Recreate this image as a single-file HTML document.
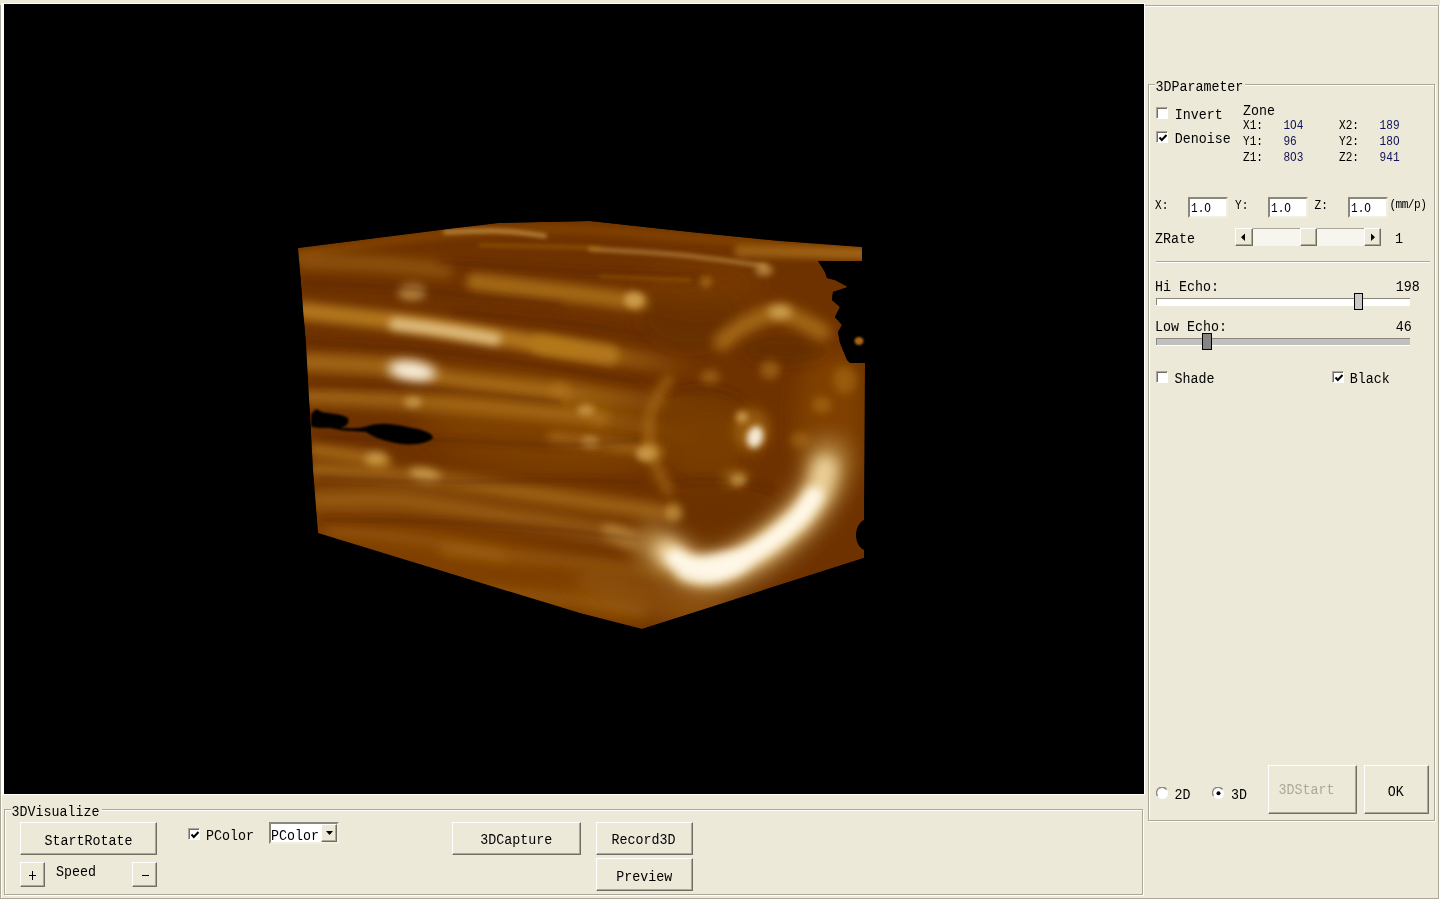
<!DOCTYPE html>
<html><head><meta charset='utf-8'><style>
*{margin:0;padding:0}
html,body{width:1440px;height:900px;overflow:hidden;background:#ECE9D8;position:relative}
.abs{position:absolute}
.t{position:absolute;font-family:'Liberation Mono',monospace;line-height:13px;white-space:pre;color:#000;transform-origin:0 0}
.btn{position:absolute;box-sizing:border-box;background:#ECE9D8;border-top:1px solid #fff;border-left:1px solid #fff;border-right:1px solid #716F64;border-bottom:1px solid #716F64;box-shadow:inset -1px -1px #ACA899}
.grp{position:absolute;border:1px solid #ACA899;box-shadow:inset 1px 1px #fff,1px 1px #fff}
.chk{position:absolute;width:12px;height:12px;box-sizing:border-box;background:#fff;border-top:1px solid #ACA899;border-left:1px solid #ACA899;border-right:1px solid #fff;border-bottom:1px solid #fff;box-shadow:inset 1px 1px #716F64}
.sunk{box-sizing:content-box;border-top:2px solid #8a887c;border-left:2px solid #8a887c;border-right:2px solid #F1EFE2;border-bottom:2px solid #F1EFE2}
.track{background:#F6F5EE;box-sizing:border-box;border-top:1px solid #ACA899;border-left:1px solid #ACA899}
</style></head><body>
<div class="abs" style="left:0;top:5px;width:1438px;height:893px;border-left:1px solid #ACA899;border-top:1px solid #ACA899;box-shadow:inset 1px 1px #fff"></div>
<div class="abs" style="left:1438px;top:5px;width:1px;height:894px;background:#ACA899"></div>
<div class="abs" style="left:0px;top:898px;width:1439px;height:1px;background:#ACA899"></div>
<div class="abs" style="left:1439px;top:5px;width:1px;height:895px;background:#fff"></div>
<div class="abs" style="left:0px;top:899px;width:1440px;height:1px;background:#fff"></div>
<div class="abs" style="left:1px;top:3px;width:1144px;height:792px;background:#fff"></div>
<div class="abs" style="left:4px;top:4px;width:1140px;height:790px;background:#000;overflow:hidden"><svg width="1140" height="790" viewBox="4 4 1140 790" style="position:absolute;left:0;top:0">
<defs>
<linearGradient id="gL" gradientUnits="userSpaceOnUse" x1="560" y1="0" x2="700" y2="0"><stop offset="0" stop-color="#b4781a"/><stop offset="1" stop-color="#b4781a" stop-opacity="0"/></linearGradient><clipPath id="cp"><polygon points="298,248 448,229 498,223 590,221 690,232 780,241 862,247 862,261 818,261 825,272 827,278 835,280 848,287 833,292 832,300 840,307 835,317 842,325 838,332 840,343 847,360 850,363 865,363 864,558 642,629 580,613 318,533 313,470 306,345"/></clipPath>
<filter id="b1" filterUnits="userSpaceOnUse" x="200" y="150" width="800" height="600"><feGaussianBlur stdDeviation="1"/></filter><filter id="b2" filterUnits="userSpaceOnUse" x="200" y="150" width="800" height="600"><feGaussianBlur stdDeviation="2"/></filter><filter id="b3" filterUnits="userSpaceOnUse" x="200" y="150" width="800" height="600"><feGaussianBlur stdDeviation="3"/></filter><filter id="b4" filterUnits="userSpaceOnUse" x="200" y="150" width="800" height="600"><feGaussianBlur stdDeviation="4"/></filter><filter id="b5" filterUnits="userSpaceOnUse" x="200" y="150" width="800" height="600"><feGaussianBlur stdDeviation="5"/></filter><filter id="b6" filterUnits="userSpaceOnUse" x="200" y="150" width="800" height="600"><feGaussianBlur stdDeviation="6"/></filter><filter id="b7" filterUnits="userSpaceOnUse" x="200" y="150" width="800" height="600"><feGaussianBlur stdDeviation="7"/></filter><filter id="b8" filterUnits="userSpaceOnUse" x="200" y="150" width="800" height="600"><feGaussianBlur stdDeviation="8"/></filter><filter id="b9" filterUnits="userSpaceOnUse" x="200" y="150" width="800" height="600"><feGaussianBlur stdDeviation="9"/></filter><filter id="b10" filterUnits="userSpaceOnUse" x="200" y="150" width="800" height="600"><feGaussianBlur stdDeviation="10"/></filter><filter id="b12" filterUnits="userSpaceOnUse" x="200" y="150" width="800" height="600"><feGaussianBlur stdDeviation="12"/></filter><filter id="b14" filterUnits="userSpaceOnUse" x="200" y="150" width="800" height="600"><feGaussianBlur stdDeviation="14"/></filter><filter id="b16" filterUnits="userSpaceOnUse" x="200" y="150" width="800" height="600"><feGaussianBlur stdDeviation="16"/></filter><filter id="b20" filterUnits="userSpaceOnUse" x="200" y="150" width="800" height="600"><feGaussianBlur stdDeviation="20"/></filter>
</defs>
<g clip-path="url(#cp)">
<polygon points="298,248 448,229 498,223 590,221 690,232 780,241 862,247 862,261 818,261 825,272 827,278 835,280 848,287 833,292 832,300 840,307 835,317 842,325 838,332 840,343 847,360 850,363 865,363 864,558 642,629 580,613 318,533 313,470 306,345" fill="#6e3200"/>
<ellipse cx="470" cy="575" rx="175" ry="48" fill="#8a4a04" fill-opacity="0.6" transform="rotate(16 470 575)" filter="url(#b14)"/>
<ellipse cx="690" cy="315" rx="50" ry="35" fill="#582800" fill-opacity="0.35" transform="rotate(0 690 315)" filter="url(#b10)"/>
<ellipse cx="540" cy="425" rx="120" ry="50" fill="#8a4a04" fill-opacity="0.55" transform="rotate(8 540 425)" filter="url(#b16)"/>
<ellipse cx="830" cy="420" rx="35" ry="75" fill="#8a4a04" fill-opacity="0.6" transform="rotate(0 830 420)" filter="url(#b10)"/>
<ellipse cx="700" cy="285" rx="60" ry="25" fill="#8a4a04" fill-opacity="0.3" transform="rotate(0 700 285)" filter="url(#b10)"/>
<path d="M300,254 C324.2,250.7 400.3,238.2 445,234 C489.7,229.8 527.2,228.3 568,229 C608.8,229.7 641.0,234.2 690,238 C739.0,241.8 833.3,249.7 862,252" stroke="#8a4a04" stroke-width="10" stroke-opacity="0.6" fill="none" stroke-linecap="round" filter="url(#b3)"/>
<path d="M445,232 C454.2,231.8 483.3,230.3 500,231 C516.7,231.7 537.5,235.2 545,236" stroke="#d8ac5c" stroke-width="4" stroke-opacity="0.7" fill="none" stroke-linecap="round" filter="url(#b2)"/>
<path d="M590,249 C605.0,250.0 650.8,252.2 680,255 C709.2,257.8 750.8,264.2 765,266" stroke="#d8ac5c" stroke-width="4" stroke-opacity="0.55" fill="none" stroke-linecap="round" filter="url(#b2)"/>
<ellipse cx="764" cy="270" rx="9" ry="6" fill="#d8ac5c" fill-opacity="0.6" transform="rotate(0 764 270)" filter="url(#b3)"/>
<path d="M740,251 C760.3,251.5 841.7,253.5 862,254" stroke="#b4781a" stroke-width="12" stroke-opacity="0.6" fill="none" stroke-linecap="round" filter="url(#b3)"/>
<path d="M600,276 C615.0,276.7 675.0,279.3 690,280" stroke="#b4781a" stroke-width="3" stroke-opacity="0.5" fill="none" stroke-linecap="round" filter="url(#b2)"/>
<path d="M480,245 C500.0,245.5 580.0,247.5 600,248" stroke="#b4781a" stroke-width="3" stroke-opacity="0.5" fill="none" stroke-linecap="round" filter="url(#b2)"/>
<path d="M303,261 C315.8,261.5 356.3,262.5 380,264 C403.7,265.5 434.2,269.0 445,270" stroke="#b4781a" stroke-width="16" stroke-opacity="0.45" fill="none" stroke-linecap="round" filter="url(#b6)"/>
<path d="M475,282 C489.2,283.7 532.5,288.7 560,292 C587.5,295.3 626.7,300.3 640,302" stroke="#b4781a" stroke-width="18" stroke-opacity="0.75" fill="none" stroke-linecap="round" filter="url(#b5)"/>
<ellipse cx="634" cy="300" rx="10" ry="8" fill="#d8ac5c" fill-opacity="0.75" transform="rotate(0 634 300)" filter="url(#b3)"/>
<ellipse cx="412" cy="292" rx="14" ry="8" fill="#d8ac5c" fill-opacity="0.7" transform="rotate(0 412 292)" filter="url(#b4)"/>
<path d="M303,311 C319.2,312.8 374.7,318.8 400,322 C425.3,325.2 431.7,326.3 455,330 C478.3,333.7 514.2,339.8 540,344 C565.8,348.2 598.3,353.2 610,355" stroke="#b4781a" stroke-width="18" stroke-opacity="0.95" fill="none" stroke-linecap="round" filter="url(#b5)"/>
<path d="M540,344 C556.7,346.7 613.3,356.0 640,360 C666.7,364.0 690.0,366.7 700,368" stroke="url(#gL)" stroke-width="18" stroke-opacity="0.9" fill="none" stroke-linecap="round" filter="url(#b5)"/>
<path d="M395,324 C402.5,325.0 423.3,327.5 440,330 C456.7,332.5 485.8,337.5 495,339" stroke="#ecd098" stroke-width="12" stroke-opacity="0.8" fill="none" stroke-linecap="round" filter="url(#b4)"/>
<path d="M305,362 C320.8,363.0 375.0,365.0 400,368 C425.0,371.0 428.3,376.0 455,380 C481.7,384.0 542.5,390.0 560,392" stroke="#b4781a" stroke-width="18" stroke-opacity="0.75" fill="none" stroke-linecap="round" filter="url(#b6)"/>
<path d="M560,392 C575.0,393.7 626.7,399.8 650,402 C673.3,404.2 691.7,404.5 700,405" stroke="url(#gL)" stroke-width="18" stroke-opacity="0.7" fill="none" stroke-linecap="round" filter="url(#b6)"/>
<ellipse cx="412" cy="371" rx="24" ry="10" fill="#fff8e8" fill-opacity="0.95" transform="rotate(8 412 371)" filter="url(#b6)"/>
<path d="M305,396 C324.2,397.0 384.2,399.7 420,402 C455.8,404.3 490.0,407.3 520,410 C550.0,412.7 586.7,416.7 600,418" stroke="#b4781a" stroke-width="16" stroke-opacity="0.7" fill="none" stroke-linecap="round" filter="url(#b6)"/>
<path d="M600,418 C610.0,419.7 645.0,425.2 660,428 C675.0,430.8 685.0,433.8 690,435" stroke="url(#gL)" stroke-width="16" stroke-opacity="0.6" fill="none" stroke-linecap="round" filter="url(#b6)"/>
<ellipse cx="413" cy="402" rx="9" ry="6" fill="#d8ac5c" fill-opacity="0.6" transform="rotate(0 413 402)" filter="url(#b3)"/>
<ellipse cx="586" cy="410" rx="9" ry="6" fill="#d8ac5c" fill-opacity="0.6" transform="rotate(0 586 410)" filter="url(#b3)"/>
<path d="M315,450 C320.8,450.8 338.3,453.0 350,455 C361.7,457.0 379.2,460.8 385,462" stroke="#b4781a" stroke-width="14" stroke-opacity="0.7" fill="none" stroke-linecap="round" filter="url(#b5)"/>
<ellipse cx="376" cy="459" rx="11" ry="7" fill="#d8ac5c" fill-opacity="0.75" transform="rotate(0 376 459)" filter="url(#b4)"/>
<path d="M315,470 C330.3,471.2 385.2,475.2 407,477 C428.8,478.8 421.7,477.7 446,481 C470.3,484.3 517.3,491.8 553,497 C588.7,502.2 642.2,509.5 660,512" stroke="#b4781a" stroke-width="16" stroke-opacity="0.7" fill="none" stroke-linecap="round" filter="url(#b6)"/>
<ellipse cx="425" cy="475" rx="16" ry="7" fill="#d8ac5c" fill-opacity="0.75" transform="rotate(10 425 475)" filter="url(#b4)"/>
<path d="M553,438 C560.8,438.8 582.2,440.7 600,443 C617.8,445.3 650.0,450.5 660,452" stroke="#b4781a" stroke-width="12" stroke-opacity="0.6" fill="none" stroke-linecap="round" filter="url(#b5)"/>
<ellipse cx="590" cy="442" rx="9" ry="6" fill="#d8ac5c" fill-opacity="0.6" transform="rotate(0 590 442)" filter="url(#b3)"/>
<ellipse cx="645" cy="454" rx="9" ry="7" fill="#d8ac5c" fill-opacity="0.6" transform="rotate(0 645 454)" filter="url(#b3)"/>
<path d="M315,500 C329.2,500.0 369.2,497.5 400,500 C430.8,502.5 468.3,510.0 500,515 C531.7,520.0 565.0,525.0 590,530 C615.0,535.0 640.0,542.5 650,545" stroke="#b4781a" stroke-width="18" stroke-opacity="0.6" fill="none" stroke-linecap="round" filter="url(#b7)"/>
<ellipse cx="620" cy="535" rx="20" ry="8" fill="#d8ac5c" fill-opacity="0.55" transform="rotate(20 620 535)" filter="url(#b5)"/>
<path d="M446,550 C465.0,551.7 524.3,556.3 560,560 C595.7,563.7 643.3,570.0 660,572" stroke="#b4781a" stroke-width="14" stroke-opacity="0.35" fill="none" stroke-linecap="round" filter="url(#b6)"/>
<path d="M330,530 C345.0,531.7 391.7,535.8 420,540 C448.3,544.2 486.7,552.5 500,555" stroke="#b4781a" stroke-width="12" stroke-opacity="0.3" fill="none" stroke-linecap="round" filter="url(#b6)"/>
<path d="M480,592 C495.0,593.3 543.3,596.7 570,600 C596.7,603.3 628.3,610.0 640,612" stroke="#b4781a" stroke-width="12" stroke-opacity="0.35" fill="none" stroke-linecap="round" filter="url(#b6)"/>
<path d="M303,283 C319.2,283.8 372.2,285.8 400,288 C427.8,290.2 443.3,293.2 470,296 C496.7,298.8 545.0,303.5 560,305" stroke="#582800" stroke-width="6" stroke-opacity="0.45" fill="none" stroke-linecap="round" filter="url(#b3)"/>
<path d="M303,342 C322.5,343.3 387.2,347.0 420,350 C452.8,353.0 463.3,354.7 500,360 C536.7,365.3 616.7,378.3 640,382" stroke="#582800" stroke-width="6" stroke-opacity="0.45" fill="none" stroke-linecap="round" filter="url(#b3)"/>
<path d="M305,385 C324.2,385.5 377.5,385.2 420,388 C462.5,390.8 536.7,399.7 560,402" stroke="#582800" stroke-width="6" stroke-opacity="0.45" fill="none" stroke-linecap="round" filter="url(#b3)"/>
<path d="M320,438 C340.0,438.3 400.0,438.8 440,440 C480.0,441.2 526.7,445.0 560,445 C593.3,445.0 626.7,440.8 640,440" stroke="#582800" stroke-width="6" stroke-opacity="0.45" fill="none" stroke-linecap="round" filter="url(#b3)"/>
<path d="M320,478 C340.0,478.7 400.0,481.7 440,482 C480.0,482.3 526.7,480.0 560,480 C593.3,480.0 626.7,481.7 640,482" stroke="#582800" stroke-width="6" stroke-opacity="0.45" fill="none" stroke-linecap="round" filter="url(#b3)"/>
<path d="M325,520 C344.2,520.3 400.8,520.3 440,522 C479.2,523.7 526.7,527.0 560,530 C593.3,533.0 626.7,538.3 640,540" stroke="#582800" stroke-width="6" stroke-opacity="0.45" fill="none" stroke-linecap="round" filter="url(#b3)"/>
<path d="M440,262 C460.0,263.3 516.7,267.7 560,270 C603.3,272.3 676.7,275.0 700,276" stroke="#582800" stroke-width="6" stroke-opacity="0.45" fill="none" stroke-linecap="round" filter="url(#b3)"/>
<path d="M455,312 C472.5,313.7 527.5,318.2 560,322 C592.5,325.8 635.0,332.8 650,335" stroke="#582800" stroke-width="6" stroke-opacity="0.45" fill="none" stroke-linecap="round" filter="url(#b3)"/>
<ellipse cx="785" cy="350" rx="45" ry="14" fill="#582800" fill-opacity="0.4" transform="rotate(0 785 350)" filter="url(#b7)"/>
<path d="M722,342 C725.8,339.2 735.3,329.8 745,325 C754.7,320.2 767.2,311.8 780,313 C792.8,314.2 815.0,328.8 822,332" stroke="#b4781a" stroke-width="18" stroke-opacity="0.75" fill="none" stroke-linecap="round" filter="url(#b6)"/>
<ellipse cx="780" cy="312" rx="12" ry="7" fill="#d8ac5c" fill-opacity="0.8" transform="rotate(0 780 312)" filter="url(#b4)"/>
<ellipse cx="706" cy="282" rx="6" ry="6" fill="#b4781a" fill-opacity="0.6" transform="rotate(0 706 282)" filter="url(#b3)"/>
<ellipse cx="710" cy="377" rx="10" ry="7" fill="#b4781a" fill-opacity="0.6" transform="rotate(0 710 377)" filter="url(#b4)"/>
<ellipse cx="770" cy="370" rx="10" ry="9" fill="#b4781a" fill-opacity="0.6" transform="rotate(0 770 370)" filter="url(#b4)"/>
<path d="M662,400 C668.3,398.7 687.3,391.7 700,392 C712.7,392.3 731.0,394.0 738,402 C745.0,410.0 743.0,428.0 742,440 C741.0,452.0 740.7,468.0 732,474 C723.3,480.0 701.7,478.7 690,476 C678.3,473.3 666.7,461.0 662,458 Z" fill="#582800" fill-opacity="0.12" filter="url(#b9)"/>
<path d="M664,492 C673.3,491.0 702.7,485.3 720,486 C737.3,486.7 757.7,491.2 768,496 C778.3,500.8 783.7,508.5 782,515 C780.3,521.5 771.7,529.8 758,535 C744.3,540.2 715.2,546.8 700,546 C684.8,545.2 672.5,532.7 667,530 Z" fill="#582800" fill-opacity="0.12" filter="url(#b9)"/>
<ellipse cx="705" cy="440" rx="45" ry="40" fill="#8a4a04" fill-opacity="0.45" transform="rotate(0 705 440)" filter="url(#b12)"/>
<ellipse cx="735" cy="478" rx="15" ry="9" fill="#b4781a" fill-opacity="0.5" transform="rotate(0 735 478)" filter="url(#b5)"/>
<ellipse cx="673" cy="512" rx="8" ry="10" fill="#b4781a" fill-opacity="0.5" transform="rotate(0 673 512)" filter="url(#b4)"/>
<path d="M668,482 C676.7,481.5 703.0,478.0 720,479 C737.0,480.0 761.7,486.5 770,488" stroke="#502400" stroke-width="5" stroke-opacity="0.4" fill="none" stroke-linecap="round" filter="url(#b3)"/>
<path d="M668,393 C673.3,392.2 688.3,387.5 700,388 C711.7,388.5 731.7,394.7 738,396" stroke="#502400" stroke-width="5" stroke-opacity="0.35" fill="none" stroke-linecap="round" filter="url(#b3)"/>
<path d="M668,380 C665.0,385.8 652.7,402.5 650,415 C647.3,427.5 649.0,442.5 652,455 C655.0,467.5 665.3,484.2 668,490" stroke="#b4781a" stroke-width="12" stroke-opacity="0.5" fill="none" stroke-linecap="round" filter="url(#b5)"/>
<ellipse cx="649" cy="453" rx="9" ry="8" fill="#d8ac5c" fill-opacity="0.55" transform="rotate(0 649 453)" filter="url(#b4)"/>
<ellipse cx="673" cy="513" rx="9" ry="8" fill="#d8ac5c" fill-opacity="0.55" transform="rotate(0 673 513)" filter="url(#b4)"/>
<ellipse cx="752" cy="430" rx="18" ry="22" fill="#b4781a" fill-opacity="0.55" transform="rotate(0 752 430)" filter="url(#b6)"/>
<ellipse cx="755" cy="437" rx="8" ry="11" fill="#fff8e8" fill-opacity="0.9" transform="rotate(15 755 437)" filter="url(#b3)"/>
<ellipse cx="742" cy="417" rx="6" ry="6" fill="#d8ac5c" fill-opacity="0.75" transform="rotate(0 742 417)" filter="url(#b3)"/>
<ellipse cx="738" cy="480" rx="8" ry="6" fill="#d8ac5c" fill-opacity="0.6" transform="rotate(0 738 480)" filter="url(#b3)"/>
<ellipse cx="800" cy="440" rx="10" ry="8" fill="#b4781a" fill-opacity="0.5" transform="rotate(0 800 440)" filter="url(#b4)"/>
<ellipse cx="822" cy="405" rx="10" ry="8" fill="#b4781a" fill-opacity="0.55" transform="rotate(0 822 405)" filter="url(#b4)"/>
<ellipse cx="845" cy="380" rx="12" ry="14" fill="#b4781a" fill-opacity="0.5" transform="rotate(0 845 380)" filter="url(#b5)"/>
<path d="M656,545 C663.8,549.8 687.0,572.0 703,574 C719.0,576.0 736.2,566.0 752,557 C767.8,548.0 786.3,532.0 798,520 C809.7,508.0 817.0,495.3 822,485 C827.0,474.7 827.0,462.5 828,458" stroke="#b48a48" stroke-width="44" stroke-opacity="0.8" fill="none" stroke-linecap="round" filter="url(#b10)"/>
<path d="M667,552 C673.2,555.3 690.0,571.5 704,572 C718.0,572.5 735.7,563.5 751,555 C766.3,546.5 784.8,531.5 796,521 C807.2,510.5 813.2,500.8 818,492 C822.8,483.2 823.8,472.0 825,468" stroke="#ecd098" stroke-width="26" stroke-opacity="1.0" fill="none" stroke-linecap="round" filter="url(#b7)"/>
<path d="M675,558 C679.8,560.2 691.3,571.7 704,571 C716.7,570.3 735.8,562.3 751,554 C766.2,545.7 784.5,530.7 795,521 C805.5,511.3 810.8,500.2 814,496" stroke="#fff8e8" stroke-width="18" stroke-opacity="1.0" fill="none" stroke-linecap="round" filter="url(#b5)"/>
<ellipse cx="712" cy="568" rx="36" ry="13" fill="#fff8e8" fill-opacity="0.85" transform="rotate(-10 712 568)" filter="url(#b6)"/>
<ellipse cx="660" cy="600" rx="90" ry="20" fill="#a86a14" fill-opacity="0.45" transform="rotate(15 660 600)" filter="url(#b10)"/>
<path d="M316,409 L322,412 C330,414 340,413 348,418 C350,424 345,427 340,428 C350,428 360,429 368,426 C380,422 395,424 412,428 C425,430 433,434 433,438 C428,444 410,446 395,443 C380,440 372,436 366,432 C355,431 348,432 330,428 C320,428 313,428 311,426 L311,414 Z" fill="#000" filter="url(#b1)"/>
<ellipse cx="868" cy="535" rx="12" ry="16" fill="#000"/>
</g>
<ellipse cx="859" cy="341" rx="4.5" ry="4" fill="#a86414" filter="url(#b1)"/>
</svg></div>
<div class="grp" style="left:4px;top:809px;width:1137px;height:84px"></div>
<div class="abs" style="left:11px;top:802px;width:91px;height:14px;background:#ECE9D8"></div>
<div class="t" style="left:11.5px;top:804.4px;font-size:13.33px;transform:scaleY(1.15);">3DVisualize</div>
<div class="btn" style="left:20px;top:822px;width:137px;height:33px;"></div>
<div class="t" style="left:44.6px;top:833.2px;font-size:13.33px;transform:scaleY(1.15);">StartRotate</div>
<div class="btn" style="left:20px;top:862px;width:25px;height:25px;"></div>
<div class="abs" style="left:29px;top:874.5px;width:7px;height:1.3px;background:#000"></div><div class="abs" style="left:31.8px;top:871px;width:1.3px;height:9px;background:#000"></div>
<div class="t" style="left:55.9px;top:863.8px;font-size:13.33px;transform:scaleY(1.15);">Speed</div>
<div class="btn" style="left:132px;top:862px;width:25px;height:25px;"></div>
<div class="abs" style="left:142px;top:875px;width:7px;height:1.3px;background:#000"></div>
<div class="chk" style="left:188px;top:828px"><svg width="12" height="12" style="position:absolute;left:0;top:0"><path d="M2.5 5.5 L4.8 8 L9.5 3" stroke="#000" stroke-width="2" fill="none"/></svg></div>
<div class="t" style="left:205.9px;top:827.5px;font-size:13.33px;transform:scaleY(1.15);">PColor</div>
<div class="abs sunk" style="left:269px;top:822px;width:66px;height:18px;background:#fff"></div>
<div class="t" style="left:270.9px;top:827.5px;font-size:13.33px;transform:scaleY(1.15);">PColor</div>
<div class="btn" style="left:321px;top:824px;width:16px;height:18px;"></div>
<svg class="abs" style="left:325px;top:830px" width="10" height="6"><path d="M1 1 L8 1 L4.5 5 Z" fill="#000"/></svg>
<div class="btn" style="left:452px;top:822px;width:129px;height:33px;"></div>
<div class="t" style="left:480.2px;top:832.2px;font-size:13.33px;transform:scaleY(1.15);">3DCapture</div>
<div class="btn" style="left:596px;top:822px;width:97px;height:33px;"></div>
<div class="t" style="left:611.5px;top:832.2px;font-size:13.33px;transform:scaleY(1.15);">Record3D</div>
<div class="btn" style="left:596px;top:858px;width:97px;height:33px;"></div>
<div class="t" style="left:616.2px;top:868.8px;font-size:13.33px;transform:scaleY(1.15);">Preview</div>
<div class="grp" style="left:1148px;top:84px;width:285px;height:735px"></div>
<div class="abs" style="left:1155px;top:78px;width:90px;height:14px;background:#ECE9D8"></div>
<div class="t" style="left:1155.4px;top:79.3px;font-size:13.33px;transform:scaleY(1.15);">3DParameter</div>
<div class="chk" style="left:1156px;top:107px"></div>
<div class="t" style="left:1174.7px;top:107.1px;font-size:13.33px;transform:scaleY(1.15);">Invert</div>
<div class="chk" style="left:1156px;top:131px"><svg width="12" height="12" style="position:absolute;left:0;top:0"><path d="M2.5 5.5 L4.8 8 L9.5 3" stroke="#000" stroke-width="2" fill="none"/></svg></div>
<div class="t" style="left:1174.7px;top:130.8px;font-size:13.33px;transform:scaleY(1.15);">Denoise</div>
<div class="t" style="left:1243.0px;top:103.2px;font-size:13.33px;transform:scaleY(1.15);">Zone</div>
<div class="t" style="left:1243.0px;top:118.8px;font-size:11.1px;transform:scaleY(1.1);">X1:</div>
<div class="t" style="left:1283.4px;top:118.8px;font-size:11.1px;transform:scaleY(1.1);color:#101058;">1O4</div>
<div class="t" style="left:1339.0px;top:118.8px;font-size:11.1px;transform:scaleY(1.1);">X2:</div>
<div class="t" style="left:1379.6px;top:118.8px;font-size:11.1px;transform:scaleY(1.1);color:#101058;">189</div>
<div class="t" style="left:1243.0px;top:134.7px;font-size:11.1px;transform:scaleY(1.1);">Y1:</div>
<div class="t" style="left:1283.4px;top:134.7px;font-size:11.1px;transform:scaleY(1.1);color:#101058;">96</div>
<div class="t" style="left:1339.0px;top:134.7px;font-size:11.1px;transform:scaleY(1.1);">Y2:</div>
<div class="t" style="left:1379.6px;top:134.7px;font-size:11.1px;transform:scaleY(1.1);color:#101058;">18O</div>
<div class="t" style="left:1243.0px;top:150.6px;font-size:11.1px;transform:scaleY(1.1);">Z1:</div>
<div class="t" style="left:1283.4px;top:150.6px;font-size:11.1px;transform:scaleY(1.1);color:#101058;">8O3</div>
<div class="t" style="left:1339.0px;top:150.6px;font-size:11.1px;transform:scaleY(1.1);">Z2:</div>
<div class="t" style="left:1379.6px;top:150.6px;font-size:11.1px;transform:scaleY(1.1);color:#101058;">941</div>
<div class="t" style="left:1155.0px;top:199.0px;font-size:11.1px;transform:scaleY(1.1);">X:</div>
<div class="t" style="left:1235.0px;top:199.0px;font-size:11.1px;transform:scaleY(1.1);">Y:</div>
<div class="t" style="left:1314.5px;top:199.0px;font-size:11.1px;transform:scaleY(1.1);">Z:</div>
<div class="abs sunk" style="left:1188px;top:197px;width:36px;height:17px;background:#fff"></div>
<div class="t" style="left:1191.0px;top:202.1px;font-size:11.1px;transform:scaleY(1.1);">1.O</div>
<div class="abs sunk" style="left:1268px;top:197px;width:36px;height:17px;background:#fff"></div>
<div class="t" style="left:1271.0px;top:202.1px;font-size:11.1px;transform:scaleY(1.1);">1.O</div>
<div class="abs sunk" style="left:1348px;top:197px;width:36px;height:17px;background:#fff"></div>
<div class="t" style="left:1351.0px;top:202.1px;font-size:11.1px;transform:scaleY(1.1);">1.O</div>
<div class="t" style="left:1389.4px;top:198.0px;font-size:11.1px;transform:scaleY(1.1);letter-spacing:-0.5px">(mm/p)</div>
<div class="t" style="left:1155.0px;top:230.8px;font-size:13.33px;transform:scaleY(1.15);">ZRate</div>
<div class="abs track" style="left:1235px;top:228px;width:146px;height:18px"></div>
<div class="btn" style="left:1235px;top:228px;width:18px;height:18px;"></div>
<svg class="abs" style="left:1240px;top:233px" width="6" height="9"><path d="M5 0.5 L5 8 L1 4.25 Z" fill="#000"/></svg>
<div class="btn" style="left:1300px;top:228px;width:17px;height:18px;"></div>
<div class="btn" style="left:1364px;top:228px;width:17px;height:18px;"></div>
<svg class="abs" style="left:1370px;top:233px" width="6" height="9"><path d="M1 0.5 L1 8 L5 4.25 Z" fill="#000"/></svg>
<div class="t" style="left:1395.0px;top:230.8px;font-size:13.33px;transform:scaleY(1.15);">1</div>
<div class="abs" style="left:1156px;top:261px;width:274px;height:1px;background:#ACA899;border-bottom:1px solid #fff"></div>
<div class="t" style="left:1155.0px;top:278.8px;font-size:13.33px;transform:scaleY(1.15);">Hi Echo:</div>
<div class="t" style="left:1395.7px;top:279.4px;font-size:13.33px;transform:scaleY(1.15);">198</div>
<div class="abs" style="left:1156px;top:298px;width:254px;height:7px;background:#fff;border-top:1px solid #8a887c;border-left:1px solid #8a887c;box-sizing:border-box;box-shadow:0 1px #fff"></div>
<div class="abs" style="left:1354px;top:293px;width:9px;height:17px;background:#c8c8c8;border:1px solid #000;box-sizing:border-box"></div>
<div class="t" style="left:1155.0px;top:318.8px;font-size:13.33px;transform:scaleY(1.15);">Low Echo:</div>
<div class="t" style="left:1395.7px;top:318.8px;font-size:13.33px;transform:scaleY(1.15);">46</div>
<div class="abs" style="left:1156px;top:338px;width:254px;height:7px;background:#c0c0c0;border-top:1px solid #8a887c;border-left:1px solid #8a887c;box-sizing:border-box;box-shadow:0 1px #fff"></div>
<div class="abs" style="left:1202px;top:333px;width:10px;height:17px;background:#858585;border:1px solid #000;box-sizing:border-box"></div>
<div class="chk" style="left:1156px;top:371px"></div>
<div class="t" style="left:1174.6px;top:371.2px;font-size:13.33px;transform:scaleY(1.15);">Shade</div>
<div class="chk" style="left:1332px;top:371px"><svg width="12" height="12" style="position:absolute;left:0;top:0"><path d="M2.5 5.5 L4.8 8 L9.5 3" stroke="#000" stroke-width="2" fill="none"/></svg></div>
<div class="t" style="left:1349.8px;top:370.8px;font-size:13.33px;transform:scaleY(1.15);">Black</div>
<svg class="abs" style="left:1156px;top:787px" width="13" height="13"><circle cx="6.5" cy="6.5" r="5.5" fill="#fff"/><path d="M1.6 9 A5.3 5.3 0 0 1 10.5 2.5" stroke="#8a887c" stroke-width="1.4" fill="none"/></svg>
<div class="t" style="left:1174.6px;top:787.1px;font-size:13.33px;transform:scaleY(1.15);">2D</div>
<svg class="abs" style="left:1212px;top:787px" width="13" height="13"><circle cx="6.5" cy="6.5" r="5.5" fill="#fff"/><path d="M1.6 9 A5.3 5.3 0 0 1 10.5 2.5" stroke="#8a887c" stroke-width="1.4" fill="none"/><circle cx="6.5" cy="6.3" r="2" fill="#000"/></svg>
<div class="t" style="left:1231.0px;top:787.1px;font-size:13.33px;transform:scaleY(1.15);">3D</div>
<div class="btn" style="left:1268px;top:765px;width:89px;height:49px;"></div>
<div class="t" style="left:1278.4px;top:781.9px;font-size:13.33px;transform:scaleY(1.15);color:#ACA899;">3DStart</div>
<div class="btn" style="left:1364px;top:765px;width:65px;height:49px;"></div>
<div class="t" style="left:1387.8px;top:783.8px;font-size:13.33px;transform:scaleY(1.15);">OK</div>
</body></html>
